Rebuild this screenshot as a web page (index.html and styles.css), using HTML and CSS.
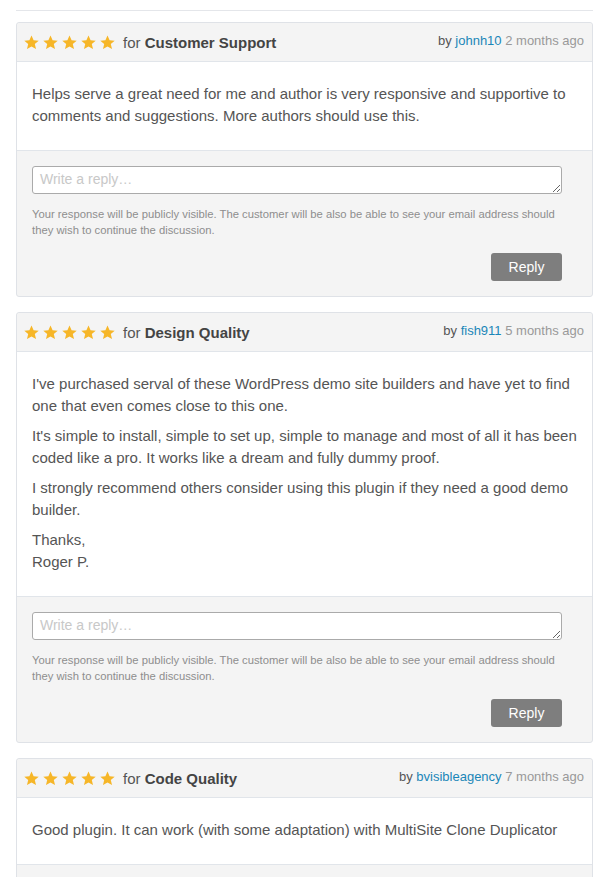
FILE: index.html
```html
<!DOCTYPE html>
<html>
<head>
<meta charset="utf-8">
<link rel="stylesheet" href="styles.css">
</head>
<body>
<div class="wrap">
  <hr class="topline">

  <div class="review">
    <div class="review-head">
      <div class="rating">
        <span class="stars">
          <svg class="star" viewBox="0 0 20 20"><path d="M10 .8l2.8 6.2 6.8.6-5.2 4.5 1.6 6.7L10 15.3l-6 3.5 1.6-6.7L.4 7.6l6.8-.6z"/></svg>
          <svg class="star" viewBox="0 0 20 20"><path d="M10 .8l2.8 6.2 6.8.6-5.2 4.5 1.6 6.7L10 15.3l-6 3.5 1.6-6.7L.4 7.6l6.8-.6z"/></svg>
          <svg class="star" viewBox="0 0 20 20"><path d="M10 .8l2.8 6.2 6.8.6-5.2 4.5 1.6 6.7L10 15.3l-6 3.5 1.6-6.7L.4 7.6l6.8-.6z"/></svg>
          <svg class="star" viewBox="0 0 20 20"><path d="M10 .8l2.8 6.2 6.8.6-5.2 4.5 1.6 6.7L10 15.3l-6 3.5 1.6-6.7L.4 7.6l6.8-.6z"/></svg>
          <svg class="star" viewBox="0 0 20 20"><path d="M10 .8l2.8 6.2 6.8.6-5.2 4.5 1.6 6.7L10 15.3l-6 3.5 1.6-6.7L.4 7.6l6.8-.6z"/></svg>
        </span>
        <span class="for">for <strong>Customer Support</strong></span>
      </div>
      <div class="meta">by <a href="#">johnh10</a> <span class="ago">2 months ago</span></div>
    </div>
    <div class="review-body">
      <p>Helps serve a great need for me and author is very responsive and supportive to comments and suggestions. More authors should use this.</p>
    </div>
    <div class="review-reply">
      <textarea class="reply-input" placeholder="Write a reply…"></textarea>
      <p class="note">Your response will be publicly visible. The customer will be also be able to see your email address should they wish to continue the discussion.</p>
      <div class="actions"><button class="reply-btn">Reply</button></div>
    </div>
  </div>

  <div class="review">
    <div class="review-head">
      <div class="rating">
        <span class="stars">
          <svg class="star" viewBox="0 0 20 20"><path d="M10 .8l2.8 6.2 6.8.6-5.2 4.5 1.6 6.7L10 15.3l-6 3.5 1.6-6.7L.4 7.6l6.8-.6z"/></svg>
          <svg class="star" viewBox="0 0 20 20"><path d="M10 .8l2.8 6.2 6.8.6-5.2 4.5 1.6 6.7L10 15.3l-6 3.5 1.6-6.7L.4 7.6l6.8-.6z"/></svg>
          <svg class="star" viewBox="0 0 20 20"><path d="M10 .8l2.8 6.2 6.8.6-5.2 4.5 1.6 6.7L10 15.3l-6 3.5 1.6-6.7L.4 7.6l6.8-.6z"/></svg>
          <svg class="star" viewBox="0 0 20 20"><path d="M10 .8l2.8 6.2 6.8.6-5.2 4.5 1.6 6.7L10 15.3l-6 3.5 1.6-6.7L.4 7.6l6.8-.6z"/></svg>
          <svg class="star" viewBox="0 0 20 20"><path d="M10 .8l2.8 6.2 6.8.6-5.2 4.5 1.6 6.7L10 15.3l-6 3.5 1.6-6.7L.4 7.6l6.8-.6z"/></svg>
        </span>
        <span class="for">for <strong>Design Quality</strong></span>
      </div>
      <div class="meta">by <a href="#">fish911</a> <span class="ago">5 months ago</span></div>
    </div>
    <div class="review-body">
      <p>I've purchased serval of these WordPress demo site builders and have yet to find one that even comes close to this one.</p>
      <p>It's simple to install, simple to set up, simple to manage and most of all it has been coded like a pro. It works like a dream and fully dummy proof.</p>
      <p>I strongly recommend others consider using this plugin if they need a good demo builder.</p>
      <p>Thanks,<br>Roger P.</p>
    </div>
    <div class="review-reply">
      <textarea class="reply-input" placeholder="Write a reply…"></textarea>
      <p class="note">Your response will be publicly visible. The customer will be also be able to see your email address should they wish to continue the discussion.</p>
      <div class="actions"><button class="reply-btn">Reply</button></div>
    </div>
  </div>

  <div class="review">
    <div class="review-head">
      <div class="rating">
        <span class="stars">
          <svg class="star" viewBox="0 0 20 20"><path d="M10 .8l2.8 6.2 6.8.6-5.2 4.5 1.6 6.7L10 15.3l-6 3.5 1.6-6.7L.4 7.6l6.8-.6z"/></svg>
          <svg class="star" viewBox="0 0 20 20"><path d="M10 .8l2.8 6.2 6.8.6-5.2 4.5 1.6 6.7L10 15.3l-6 3.5 1.6-6.7L.4 7.6l6.8-.6z"/></svg>
          <svg class="star" viewBox="0 0 20 20"><path d="M10 .8l2.8 6.2 6.8.6-5.2 4.5 1.6 6.7L10 15.3l-6 3.5 1.6-6.7L.4 7.6l6.8-.6z"/></svg>
          <svg class="star" viewBox="0 0 20 20"><path d="M10 .8l2.8 6.2 6.8.6-5.2 4.5 1.6 6.7L10 15.3l-6 3.5 1.6-6.7L.4 7.6l6.8-.6z"/></svg>
          <svg class="star" viewBox="0 0 20 20"><path d="M10 .8l2.8 6.2 6.8.6-5.2 4.5 1.6 6.7L10 15.3l-6 3.5 1.6-6.7L.4 7.6l6.8-.6z"/></svg>
        </span>
        <span class="for">for <strong>Code Quality</strong></span>
      </div>
      <div class="meta">by <a href="#">bvisibleagency</a> <span class="ago">7 months ago</span></div>
    </div>
    <div class="review-body">
      <p>Good plugin. It can work (with some adaptation) with MultiSite Clone Duplicator</p>
    </div>
    <div class="review-reply">
      <textarea class="reply-input" placeholder="Write a reply…"></textarea>
      <p class="note">Your response will be publicly visible. The customer will be also be able to see your email address should they wish to continue the discussion.</p>
      <div class="actions"><button class="reply-btn">Reply</button></div>
    </div>
  </div>
</div>
</body>
</html>
```

FILE: styles.css
```css
html, body {
  margin: 0;
  padding: 0;
  background: #fff;
}
body {
  font-family: "Liberation Sans", Arial, sans-serif;
  color: #555;
}
.wrap {
  width: 577px;
  margin-left: 16px;
}
.topline {
  border: 0;
  border-top: 1px solid #e4e6ea;
  margin: 10px 0 11px;
  height: 0;
}
.review {
  border: 1px solid #dfe2e7;
  border-radius: 3px;
  margin-bottom: 15px;
  background: #f4f4f4;
}
.review-head {
  display: flex;
  justify-content: space-between;
  align-items: center;
  height: 38px;
  padding: 0 8px 0 7px;
  border-bottom: 1px solid #e1e5ea;
  background: #f4f4f4;
  border-radius: 3px 3px 0 0;
}
.rating {
  display: flex;
  align-items: center;
}
.stars {
  display: flex;
  gap: 4px;
  margin-right: 8px;
}
.star {
  width: 15px;
  height: 15px;
  fill: #f6b628;
  display: block;
}
.for {
  font-size: 15px;
  color: #555;
}
.for strong {
  color: #444;
}
.meta {
  font-size: 13px;
  color: #555;
  margin-top: -3px;
}
.meta a {
  color: #1a86b8;
  text-decoration: none;
}
.ago {
  color: #999;
}
.review-body {
  background: #fff;
  padding: 21px 9px 23px 15px;
  border-bottom: 1px solid #e1e5ea;
}
.review-body p {
  margin: 0 0 8px;
  font-size: 15px;
  line-height: 22px;
  color: #555;
}
.review-body p:last-child {
  margin-bottom: 0;
}
.review-reply {
  padding: 15px 30px 15px 15px;
}
.reply-input {
  display: block;
  box-sizing: border-box;
  width: 100%;
  height: 28px;
  margin: 0;
  border: 1px solid #aaa;
  border-radius: 3px;
  padding: 4px 7px;
  font-family: "Liberation Sans", Arial, sans-serif;
  font-size: 14px;
  color: #555;
  background: #fff;
  resize: vertical;
}
.reply-input::placeholder {
  color: #c8c8c8;
}
.note {
  margin: 12px 0 15px;
  font-size: 11.25px;
  line-height: 16px;
  color: #8e8e8e;
}
.actions {
  display: flex;
  justify-content: flex-end;
}
.reply-btn {
  width: 71px;
  height: 28px;
  border: 0;
  border-radius: 3px;
  background: #7e7e7e;
  color: #fff;
  font-family: "Liberation Sans", Arial, sans-serif;
  font-size: 14px;
  padding: 0;
}
```
